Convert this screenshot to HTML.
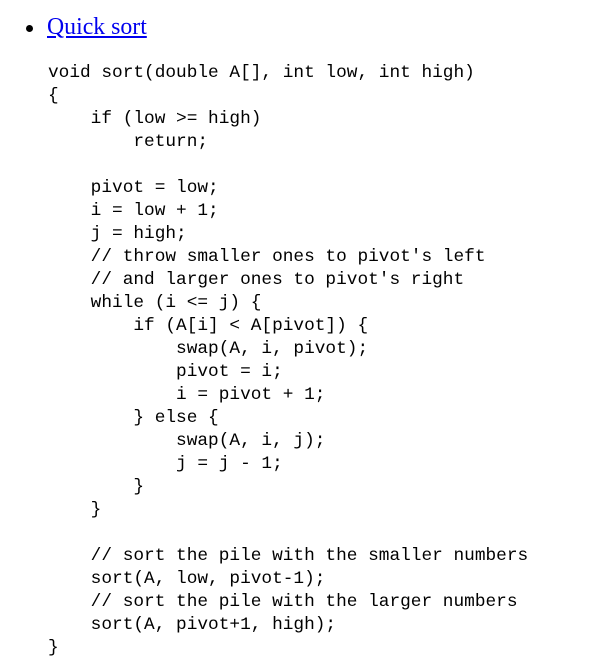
<!DOCTYPE html>
<html><head><meta charset="utf-8"><style>
body{margin:0;background:#fff;width:616px;height:672px;overflow:hidden;position:relative}
.li{position:absolute;left:24px;top:13px;font-family:"Liberation Serif",serif;font-size:23.8px;line-height:28px}
.li span.b{display:inline-block;width:7px;height:7px;border-radius:50%;background:#000;position:absolute;left:2px;top:12px}
.li a{color:#0000ee;text-decoration:underline;margin-left:23px}
pre{position:absolute;left:48px;top:62px;margin:0;font-family:"Liberation Mono",monospace;font-size:17.8px;line-height:23px;color:#000}
</style></head><body>
<div class="li"><span class="b"></span><a>Quick sort</a></div>
<pre>void sort(double A[], int low, int high)
{
    if (low &gt;= high)
        return;

    pivot = low;
    i = low + 1;
    j = high;
    // throw smaller ones to pivot's left
    // and larger ones to pivot's right
    while (i &lt;= j) {
        if (A[i] &lt; A[pivot]) {
            swap(A, i, pivot);
            pivot = i;
            i = pivot + 1;
        } else {
            swap(A, i, j);
            j = j - 1;
        }
    }

    // sort the pile with the smaller numbers
    sort(A, low, pivot-1);
    // sort the pile with the larger numbers
    sort(A, pivot+1, high);
}</pre>
</body></html>
